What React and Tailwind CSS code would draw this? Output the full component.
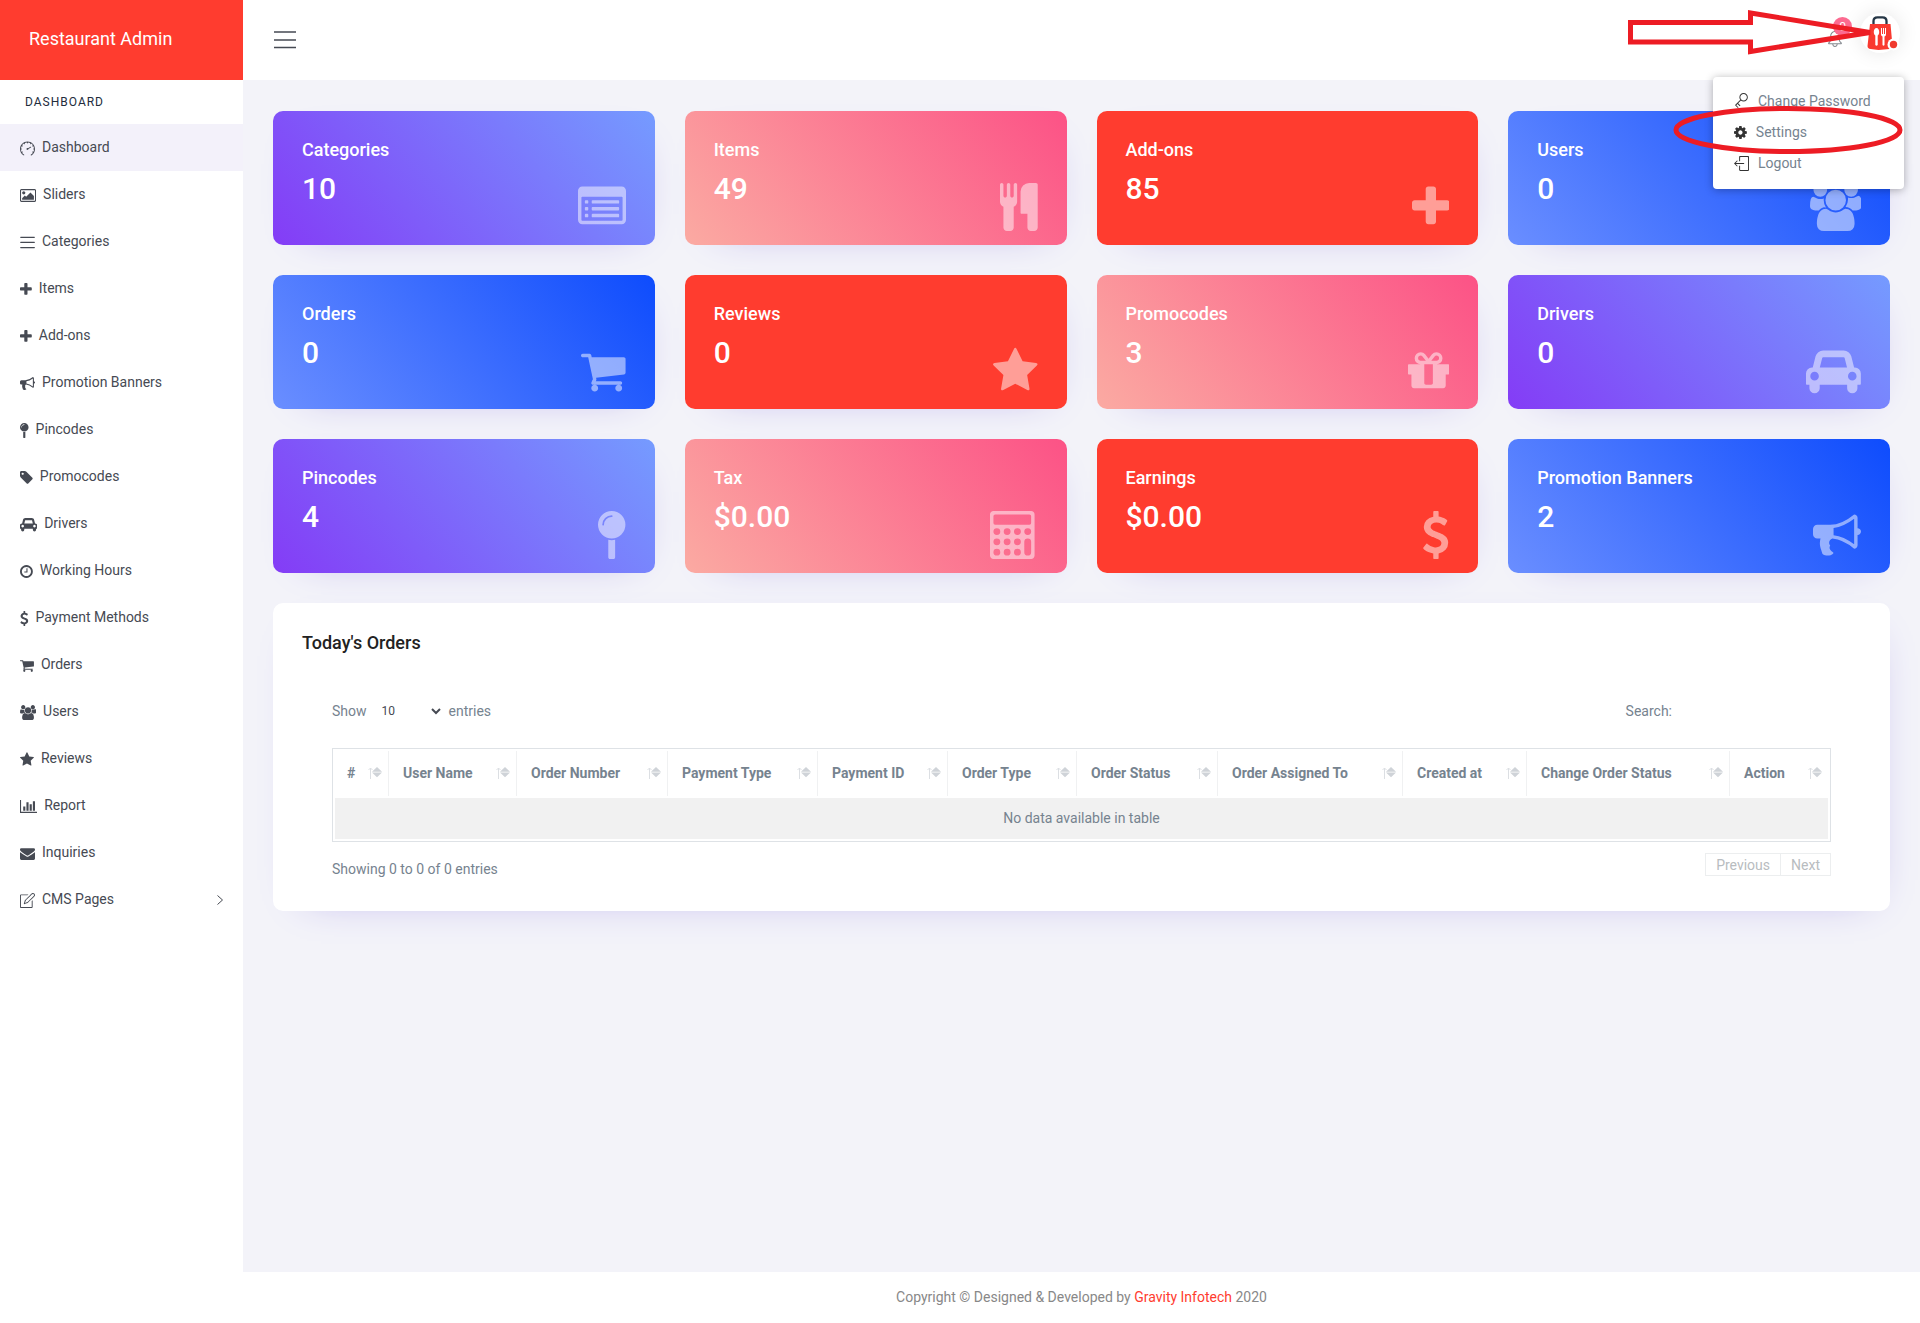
import React from "react";
import { SlSpeedometer, SlMenu, SlNote, SlKey, SlLogout, SlBell } from "react-icons/sl";

const GLYPHS = {
  plus: ["192 0 1408 1792", "M1600 736v192q0 40-28 68t-68 28h-416v416q0 40-28 68t-68 28h-192q-40 0-68-28t-28-68v-416h-416q-40 0-68-28t-28-68v-192q0-40 28-68t68-28h416v-416q0-40 28-68t68-28h192q40 0 68 28t28 68v416h416q40 0 68 28t28 68z"],
  star: ["64 0 1664 1792", "M1728 647q0 22-26 48l-363 354 86 500q1 7 1 20 0 21-10.5 35.5t-30.5 14.5q-19 0-40-12l-449-236-449 236q-22 12-40 12-21 0-31.5-14.5t-10.5-35.5q0-6 2-20l86-500-364-354q-25-27-25-48 0-37 56-46l502-73 225-455q19-41 49-41t49 41l225 455 502 73q56 9 56 46z"],
  cart: ["64 0 1664 1792", "M704 1536q0 52-38 90t-90 38-90-38-38-90 38-90 90-38 90 38 38 90zm896 0q0 52-38 90t-90 38-90-38-38-90 38-90 90-38 90 38 38 90zm128-1088v512q0 24-16.5 42.5t-40.5 21.5l-1044 122q13 60 13 70 0 16-24 64h920q26 0 45 19t19 45-19 45-45 19h-1024q-26 0-45-19t-19-45q0-11 8-31.5t16-36 21.5-40 15.5-29.5l-177-823h-204q-26 0-45-19t-19-45 19-45 45-19h256q16 0 28.5 6.5t19.5 15.5 13 24.5 8 26 5.5 29.5 4.5 26h1201q26 0 45 19t19 45z"],
  car: ["0 0 2048 1792", "M480 1088q0-66-47-113t-113-47-113 47-47 113 47 113 113 47 113-47 47-113zM516 768h1016l-89-357q-2-8-14-17.5t-21-9.5h-768q-9 0-21 9.5t-14 17.5zM1888 1088q0-66-47-113t-113-47-113 47-47 113 47 113 113 47 113-47 47-113zM2048 992v384q0 14-9 23t-23 9h-96v128q0 80-56 136t-136 56-136-56-56-136v-128h-1024v128q0 80-56 136t-136 56-136-56-56-136v-128h-96q-14 0-23-9t-9-23v-384q0-93 65.5-158.5t158.5-65.5h28l105-419q23-94 104-157.5t179-63.5h768q98 0 179 63.5t104 157.5l105 419h28q93 0 158.5 65.5t65.5 158.5z"],
  users: ["0 0 1920 1792", "M593 896q-162 5-265 128h-134q-82 0-138-40.5t-56-118.5q0-353 124-353 6 0 43.5 21t97.5 42.5 119 21.5q67 0 133-23-5 37-5 66 0 159 93 293zm1071 637q0 120-73 189.5t-194 69.5h-874q-121 0-194-69.5t-73-189.5q0-53 3.5-103.5t14-109 26.5-108.5 43-97.5 62-81 85.5-53.5 111.5-20q10 0 43 21.5t73 48 107 48 135 21.5 135-21.5 107-48 73-48 43-21.5q61 0 111.5 20t85.5 53.5 62 81 43 97.5 26.5 108.5 14 109 3.5 103.5zm-1024-1277q0 106-75 181t-181 75-181-75-75-181 75-181 181-75 181 75 75 181zm704 384q0 159-112.5 271.5t-271.5 112.5-271.5-112.5-112.5-271.5 112.5-271.5 271.5-112.5 271.5 112.5 112.5 271.5zm576 225q0 78-56 118.5t-138 40.5h-134q-103-123-265-128 93-134 93-293 0-29-5-66 66 23 133 23 59 0 119-21.5t97.5-42.5 43.5-21q124 0 124 353zm-128-609q0 106-75 181t-181 75-181-75-75-181 75-181 181-75 181 75 75 181z"],
  list: ["0 0 1792 1792", "M160 128h1472q66 0 113 47t47 113v1088q0 66-47 113t-113 47h-1472q-66 0-113-47t-47-113v-1088q0-66 47-113t113-47zM160 512q-32 0-32 32v832q0 32 32 32h1472q32 0 32-32v-832q0-32-32-32zM288 640h64q32 0 32 32v64q0 32-32 32h-64q-32 0-32-32v-64q0-32 32-32zM288 896h64q32 0 32 32v64q0 32-32 32h-64q-32 0-32-32v-64q0-32 32-32zM288 1152h64q32 0 32 32v64q0 32-32 32h-64q-32 0-32-32v-64q0-32 32-32zM544 640h960q32 0 32 32v64q0 32-32 32h-960q-32 0-32-32v-64q0-32 32-32zM544 896h960q32 0 32 32v64q0 32-32 32h-960q-32 0-32-32v-64q0-32 32-32zM544 1152h960q32 0 32 32v64q0 32-32 32h-960q-32 0-32-32v-64q0-32 32-32z"],
  cutlery: ["192 0 1408 1792", "M832 64v640q0 61-35.5 111t-92.5 70v779q0 52-38 90t-90 38h-128q-52 0-90-38t-38-90v-779q-57-20-92.5-70t-35.5-111v-640q0-26 19-45t45-19 45 19 19 45v416q0 26 19 45t45 19 45-19 19-45v-416q0-26 19-45t45-19 45 19 19 45v416q0 26 19 45t45 19 45-19 19-45v-416q0-26 19-45t45-19 45 19 19 45zm768 0v1600q0 52-38 90t-90 38h-128q-52 0-90-38t-38-90v-512h-224q-13 0-22.5-9.5t-9.5-22.5v-800q0-132 94-226t226-94h256q26 0 45 19t19 45z"],
  gift: ["128 0 1536 1792", "M1056 1356v-716h-320v716q0 25 18 38.5t46 13.5h192q28 0 46-13.5t18-38.5zm-456-844h195l-126-161q-26-31-69-31-40 0-68 28t-28 68 28 68 68 28zm688-96q0-40-28-68t-68-28q-43 0-69 31l-125 161h194q40 0 68-28t28-68zm376 256v320q0 14-9 23t-23 9h-96v416q0 40-28 68t-68 28h-1088q-40 0-68-28t-28-68v-416h-96q-14 0-23-9t-9-23v-320q0-14 9-23t23-9h440q-93 0-158.5-65.5t-65.5-158.5 65.5-158.5 158.5-65.5q107 0 168 77l128 165 128-165q61-77 168-77 93 0 158.5 65.5t65.5 158.5-65.5 158.5-158.5 65.5h440q14 0 23 9t9 23z"],
  pin: ["384 0 1024 1792", "M896 1088q66 0 128-15v655q0 26-19 45t-45 19h-128q-26 0-45-19t-19-45v-655q61 15 128 15zm0-1088q212 0 362 150t150 362-150 362-362 150-362-150-150-362 150-362 362-150zm0 224q14 0 23-9t9-23-9-23-23-9q-146 0-249 103t-103 249q0 14 9 23t23 9 23-9 9-23q0-119 84.5-203.5t203.5-84.5z"],
  calculator: ["0 0 1792 1792", "M128 0h1408q52 0 90 38t38 90v1536q0 52-38 90t-90 38h-1408q-52 0-90-38t-38-90v-1536q0-52 38-90t90-38zM192 128q-64 0-64 64v256q0 64 64 64h1280q64 0 64-64v-256q0-64-64-64zM128 768a128 128 0 1 0 256 0a128 128 0 1 0-256 0zM512 768a128 128 0 1 0 256 0a128 128 0 1 0-256 0zM896 768a128 128 0 1 0 256 0a128 128 0 1 0-256 0zM1280 768a128 128 0 1 0 256 0a128 128 0 1 0-256 0zM128 1152a128 128 0 1 0 256 0a128 128 0 1 0-256 0zM512 1152a128 128 0 1 0 256 0a128 128 0 1 0-256 0zM896 1152a128 128 0 1 0 256 0a128 128 0 1 0-256 0zM128 1536a128 128 0 1 0 256 0a128 128 0 1 0-256 0zM512 1536a128 128 0 1 0 256 0a128 128 0 1 0-256 0zM896 1536a128 128 0 1 0 256 0a128 128 0 1 0-256 0zM1280 1152v384a128 128 0 1 0 256 0v-384a128 128 0 1 0-256 0z"],
  dollar: ["384 0 1024 1792", "M1362 1185q0 153-99.5 263.5t-258.5 136.5v175q0 14-9 23t-23 9h-135q-13 0-22.5-9.5t-9.5-22.5v-175q-66-9-127.5-31t-101.5-44.5-74-48-46.5-37.5-17.5-18q-17-21-2-41l103-135q7-10 23-12 15-2 24 9l2 2q113 99 243 125 37 8 74 8 81 0 142.5-43t61.5-122q0-28-15-53t-33.5-42-58.5-37.5-66-32-80-32.5q-39-16-61.5-25t-61.5-26.5-62.5-31-56.5-35.5-53.5-42.5-43.5-49-35.5-58-21-66.5-8.5-78q0-138 98-242t255-134v-180q0-13 9.5-22.5t22.5-9.5h135q14 0 23 9t9 23v176q57 6 110.5 23t87 33.5 63.5 37.5 39 29 15 14q17 18 5 38l-81 146q-8 15-23 16-14 3-27-7-3-3-14.5-12t-39-26.5-58.5-32-74.5-26-85.5-11.5q-95 0-155 43t-60 111q0 26 8.5 48t29.5 41.5 39.5 33 56 31 60.5 27 70 27.5q53 20 81 31.5t76 35 75.5 42.5 62 50 53 63.5 31.5 76.5 13 94z"],
  bullhorn: ["0 0 1792 1792", "M1664 640q53 0 90.5 37.5t37.5 90.5-37.5 90.5-90.5 37.5v384q0 52-38 90t-90 38q-417-347-812-380-58 19-91 66t-31 100.5 40 92.5q-20 33-23 65.5t6 58 33.5 55 48 50 61.5 50.5q-29 58-111.5 83t-168.5 11.5-132-55.5q-7-23-29.5-87.5t-32-94.5-23-89-15-101 3.5-98.5 22-110.5h-122q-66 0-113-47t-47-113v-192q0-66 47-113t113-47h480q435 0 896-384 52 0 90 38t38 90v384zm-128 604v-954q-394 302-768 343v270q377 42 768 341z"],
  tag: ["128 0 1536 1792", "M576 448q0-53-37.5-90.5t-90.5-37.5-90.5 37.5-37.5 90.5 37.5 90.5 90.5 37.5 90.5-37.5 37.5-90.5zm1067 576q0 53-37 90l-491 492q-39 37-91 37-53 0-90-37l-715-716q-38-37-64.5-101t-26.5-117v-416q0-52 38-90t90-38h416q53 0 117 26.5t102 64.5l715 714q37 39 37 91z"],
  clock: ["128 0 1536 1792", "M1024 544v448q0 14-9 23t-23 9h-320q-14 0-23-9t-9-23v-64q0-14 9-23t23-9h224v-352q0-14 9-23t23-9h64q14 0 23 9t9 23zm416 352q0-148-73-273t-198-198-273-73-273 73-198 198-73 273 73 273 198 198 273 73 273-73 198-198 73-273zm224 0q0 209-103 385.5t-279.5 279.5-385.5 103-385.5-103-279.5-279.5-103-385.5 103-385.5 279.5-279.5 385.5-103 385.5 103 279.5 279.5 103 385.5z"],
  picture: ["0 0 1920 1792", "M640 576q0 80-56 136t-136 56-136-56-56-136 56-136 136-56 136 56 56 136zm1024 384v448h-1408v-192l320-320 160 160 512-512zm96-704h-1600q-13 0-22.5 9.5t-9.5 22.5v1216q0 13 9.5 22.5t22.5 9.5h1600q13 0 22.5-9.5t9.5-22.5v-1216q0-13-9.5-22.5t-22.5-9.5zm160 32v1216q0 66-47 113t-113 47h-1600q-66 0-113-47t-47-113v-1216q0-66 47-113t113-47h1600q66 0 113 47t47 113z"],
  chart: ["0 0 2048 1792", "M640 896v512h-256v-512h256zm384-512v1024h-256v-1024h256zm1024 1152v128h-2048v-1536h128v1408h1920zm-640-896v768h-256v-768h256zm384-384v1152h-256v-1152h256z"],
  envelope: ["0 0 1792 1792", "M1792 710v794q0 66-47 113t-113 47h-1472q-66 0-113-47t-47-113v-794q44 49 101 87 362 246 497 345 57 42 92.5 65.5t94.5 48 110 24.5h2q51 0 110-24.5t94.5-48 92.5-65.5q170-123 498-345 57-39 100-87zm0-294q0 79-49 151t-122 123q-376 261-468 325-10 7-42.5 31t-54 38.5-52 32.5-57.5 27-50 9h-2q-23 0-50-9t-57.5-27-52-32.5-54-38.5-42.5-31q-91-64-262-182.5t-205-142.5q-62-42-117-115.5t-55-136.5q0-78 41.5-130t118.5-52h1472q65 0 112.5 47t47.5 113z"],
  cog: ["128 0 1536 1792", "M1152 896q0-106-75-181t-181-75-181 75-75 181 75 181 181 75 181-75 75-181zm512-109v222q0 12-8 23t-20 13l-185 28q-19 54-39 91 35 50 107 138 10 12 10 25t-9 23q-27 37-99 108t-94 71q-12 0-26-9l-138-108q-44 23-91 38-16 136-29 186-7 28-36 28h-222q-14 0-24.5-8.5t-11.5-21.5l-28-184q-49-16-90-37l-141 107q-10 9-25 9-14 0-25-11-126-114-165-168-7-10-7-23 0-12 8-23 15-21 51-66.5t54-70.5q-27-50-41-99l-183-27q-13-2-21-12.5t-8-23.5v-222q0-12 8-23t19-13l186-28q14-46 39-92-40-57-107-138-10-12-10-24 0-10 9-23 26-36 98.5-107.5t94.5-71.5q13 0 26 10l138 107q44-23 91-38 16-136 29-186 7-28 36-28h222q14 0 24.5 8.5t11.5 21.5l28 184q49 16 90 37l142-107q9-9 24-9 13 0 25 10 129 119 165 170 7 8 7 22 0 12-8 23-15 21-51 66.5t-54 70.5q26 50 41 98l183 28q13 2 21 12.5t8 23.5z"],
};

function Glyph({ name, className }) {
  const [viewBox, d] = GLYPHS[name];
  return (
    <svg viewBox={viewBox} className={className} fill="currentColor" fillRule="evenodd" aria-hidden="true">
      <path d={d} />
    </svg>
  );
}

const NAV = [
  ["Dashboard", null, SlSpeedometer],
  ["Sliders", "picture"],
  ["Categories", null, SlMenu],
  ["Items", "plus"],
  ["Add-ons", "plus"],
  ["Promotion Banners", "bullhorn"],
  ["Pincodes", "pin"],
  ["Promocodes", "tag"],
  ["Drivers", "car"],
  ["Working Hours", "clock"],
  ["Payment Methods", "dollar"],
  ["Orders", "cart"],
  ["Users", "users"],
  ["Reviews", "star"],
  ["Report", "chart"],
  ["Inquiries", "envelope"],
  ["CMS Pages", null, SlNote],
];

const PURPLE = "bg-[linear-gradient(230deg,#759bff,#843cf6)]";
const PINK = "bg-[linear-gradient(230deg,#fc5286,#fbaaa2)]";
const BLUE = "bg-[linear-gradient(230deg,#0e4cfd,#6a8eff)]";
const RED = "bg-[#ff3c2f]";

const CARDS = [
  ["Categories", "10", "list", PURPLE],
  ["Items", "49", "cutlery", PINK],
  ["Add-ons", "85", "plus", RED],
  ["Users", "0", "users", BLUE],
  ["Orders", "0", "cart", BLUE],
  ["Reviews", "0", "star", RED],
  ["Promocodes", "3", "gift", PINK],
  ["Drivers", "0", "car", PURPLE],
  ["Pincodes", "4", "pin", PURPLE],
  ["Tax", "$0.00", "calculator", PINK],
  ["Earnings", "$0.00", "dollar", RED],
  ["Promotion Banners", "2", "bullhorn", BLUE],
];

const COLUMNS = [
  ["#", "w-[54px]"],
  ["User Name", "w-[126px]"],
  ["Order Number", "w-[149px]"],
  ["Payment Type", "w-[148px]"],
  ["Payment ID", "w-[128px]"],
  ["Order Type", "w-[127px]"],
  ["Order Status", "w-[139px]"],
  ["Order Assigned To", "w-[183px]"],
  ["Created at", "w-[122px]"],
  ["Change Order Status", "w-[201px]"],
  ["Action", "w-[96px]"],
];

function SortIcon() {
  return (
    <svg viewBox="0 0 14 12" className="h-3 w-3.5 shrink-0" aria-hidden="true">
      <path d="M2.500 12V1M.5 3l2-2 2 2" fill="none" stroke="#dcdfe3" />
      <path d="M9 0l5 4.700h-10zM9 10.200L4 5.500h10z" fill="#cfd3d8" />
    </svg>
  );
}

function Sidebar() {
  return (
    <aside className="flex w-[243px] shrink-0 flex-col bg-white">
      <a href="#home" className="flex h-20 items-center bg-[#ff3c2f] px-[29px] pb-0.5 text-lg text-white">Restaurant Admin</a>
      <p className="flex h-11 items-center px-[25px] text-xs tracking-[1px] text-[#222c3c]">DASHBOARD</p>
      <nav>
        <ul>
          {NAV.map(([label, glyph, Icon], i) => (
            <li key={label}>
              <a href={`#${label}`} className={`flex h-[47px] items-center gap-[7px] px-5 text-sm text-[#464a53] ${i === 0 ? "bg-[#f3f1fa]" : ""}`}>
                {Icon ? <Icon className="mt-0.5 size-[15px]" /> : <Glyph name={glyph} className="mt-0.5 h-[15px]" />}
                <span className="mb-0.5">{label}</span>
                {label === "CMS Pages" && (
                  <svg viewBox="0 0 6 10" className="ml-auto h-2.5 w-1.5" fill="none" stroke="#464a53" aria-hidden="true">
                    <path d="M.5.5L5.500 5 .5 9.500" />
                  </svg>
                )}
              </a>
            </li>
          ))}
        </ul>
      </nav>
    </aside>
  );
}

function Avatar() {
  return (
    <svg viewBox="0 0 40 40" className="size-10" role="img" aria-label="Profile">
      <path d="M13.500 12V8q0-3.700 4-3.700h5q4 0 4 3.700v4" fill="none" stroke="#263746" strokeWidth="2.300" />
      <path d="M10 11h20.500l2 22q0 3-3 3l-11 1-8-1q-3-.5-3-3z" fill="#f9392f" />
      <path d="M16.500 15c1.700 0 2.700 1.700 2.700 4 0 2-.7 3-1.500 3.500V32q-1.200 1.500-2.400 0v-9.500c-.8-.5-1.500-1.500-1.500-3.500 0-2.300 1-4 2.700-4z" fill="#fff" />
      <path d="M21 15v6.500q0 1.500 1.500 2V32q1 1.500 2 0v-8.500q1.500-.5 1.500-2V15h-1v6h-1v-6h-1v6h-1v-6z" fill="#fff" />
      <circle cx="33.500" cy="31.500" r="6" fill="#fff" />
      <circle cx="33.500" cy="31.500" r="3.700" fill="#f03a2e" />
    </svg>
  );
}

function Header() {
  return (
    <header className="relative z-10 flex h-20 items-center justify-between bg-white pr-5 pl-[31px]">
      <button type="button" aria-label="Toggle menu" className="text-[#464a53]">
        <svg viewBox="0 0 22 18" className="h-[18px] w-[22px]" stroke="currentColor" strokeWidth="1.700" aria-hidden="true">
          <path d="M0 1h22M0 9h22M0 16.500h22" />
        </svg>
      </button>
      <div className="flex items-center gap-[17px] pb-[14px]">
        <button type="button" aria-label="Notifications" className="relative pt-3 text-[#85898f]">
          <SlBell className="size-4" />
          <span className="absolute -top-0.5 left-1.5 flex size-[19px] items-center justify-center rounded-full bg-[#fc6a90] text-xs text-white">0</span>
        </button>
        <button type="button" className="rounded-full bg-white shadow-[0_0_20px_rgba(0,0,0,0.1)]"><Avatar /></button>
      </div>
      <ul className="absolute top-[77px] right-4 w-[191px] rounded bg-white pt-2 pb-2.5 pl-[21px] text-sm text-[#76838f] shadow-[0_1px_8px_rgba(0,0,0,0.3)]">
        <li><a href="#password" className="flex h-[31px] items-center gap-[9px]"><SlKey className="size-[15px] text-[#333]" />Change Password</a></li>
        <li><a href="#settings" className="flex h-[31px] items-center gap-[9px]"><Glyph name="cog" className="mt-0.5 h-[15px] text-[#333]" />Settings</a></li>
        <li><a href="#logout" className="flex h-8 items-center gap-[9px]"><SlLogout className="size-[15px] text-[#333]" />Logout</a></li>
      </ul>
      <svg viewBox="0 0 292 156" className="pointer-events-none absolute top-0 right-0 h-[156px] w-[292px]" fill="none" stroke="#ed1c24" strokeWidth="5" aria-hidden="true">
        <path d="M2.500 22.500H122.500V13L242 32.500 122.500 51.500V42H2.500z" />
        <ellipse cx="160" cy="130" rx="112" ry="21.500" />
      </svg>
    </header>
  );
}

function OrdersPanel() {
  return (
    <section className="rounded-[10px] bg-white px-[29px] pt-[29px] pb-8 shadow-[6px_11px_41px_-28px_#a99de7]">
      <h2 className="text-lg leading-[22px] font-medium text-[#222]">Today's Orders</h2>
      <div className="px-[30px] pt-[37px] text-sm text-[#76838f]">
        <div className="flex items-center justify-between">
          <label className="flex items-center">
            Show
            <select className="mr-[5px] ml-[11px] h-10 w-[66px] bg-white text-xs text-[#464a53]" defaultValue="10">
              <option>10</option>
              <option>25</option>
              <option>50</option>
            </select>
            entries
          </label>
          <label className="flex items-center">
            Search:
            <input type="search" className="ml-[9px] h-10 w-[150px] outline-none" />
          </label>
        </div>
        <table className="mt-[17px] w-full border-separate border-spacing-[2px] border border-[#dee2e6]">
          <thead>
            <tr>
              {COLUMNS.map(([label, width], i) => (
                <th key={label} scope="col" className={`${width} h-[45px] pt-0 pr-1.5 pb-0.5 pl-3 text-left font-bold whitespace-nowrap ${i < COLUMNS.length - 1 ? "border-r border-[#f0f1f2]" : ""}`}>
                  <span className="flex items-center justify-between">{label}<SortIcon /></span>
                </th>
              ))}
            </tr>
          </thead>
          <tbody>
            <tr>
              <td colSpan={11} className="h-[41px] bg-[#f1f1f1] pb-0.5 text-center">No data available in table</td>
            </tr>
          </tbody>
        </table>
        <div className="mt-[11px] flex items-start justify-between">
          <p className="pt-1.5">Showing 0 to 0 of 0 entries</p>
          <div className="flex border border-[#eceeef] text-[#b8bcc0]">
            <button type="button" className="h-[21px] px-2.5">Previous</button>
            <button type="button" className="h-[21px] border-l border-[#eceeef] px-2.5">Next</button>
          </div>
        </div>
      </div>
    </section>
  );
}

export default function App() {
  return (
    <div className="flex min-h-screen bg-white font-[Roboto,sans-serif]">
      <Sidebar />
      <div className="flex min-w-0 flex-1 flex-col">
        <Header />
        <main className="flex flex-1 flex-col gap-[30px] bg-[#f3f3f9] px-[30px] py-[31px]">
          <div className="grid grid-cols-4 gap-[30px]">
            {CARDS.map(([label, value, glyph, bg]) => (
              <div key={label} className={`flex h-[134px] justify-between rounded-[10px] px-[29px] text-white shadow-[6px_11px_41px_-28px_#a99de7] ${bg}`}>
                <div className="pt-[27px]">
                  <h3 className="text-lg leading-6 font-medium">{label}</h3>
                  <p className="mt-[9px] text-3xl leading-9 font-medium">{value}</p>
                </div>
                <Glyph name={glyph} className="mt-[72px] h-12 opacity-50" />
              </div>
            ))}
          </div>
          <OrdersPanel />
        </main>
        <footer className="flex h-[51px] items-center justify-center bg-white pb-0.5 text-sm text-[#888]">
          <p>Copyright © Designed &amp; Developed by <a href="#gravity" className="text-[#ff3c2f]">Gravity Infotech</a> 2020</p>
        </footer>
      </div>
    </div>
  );
}
